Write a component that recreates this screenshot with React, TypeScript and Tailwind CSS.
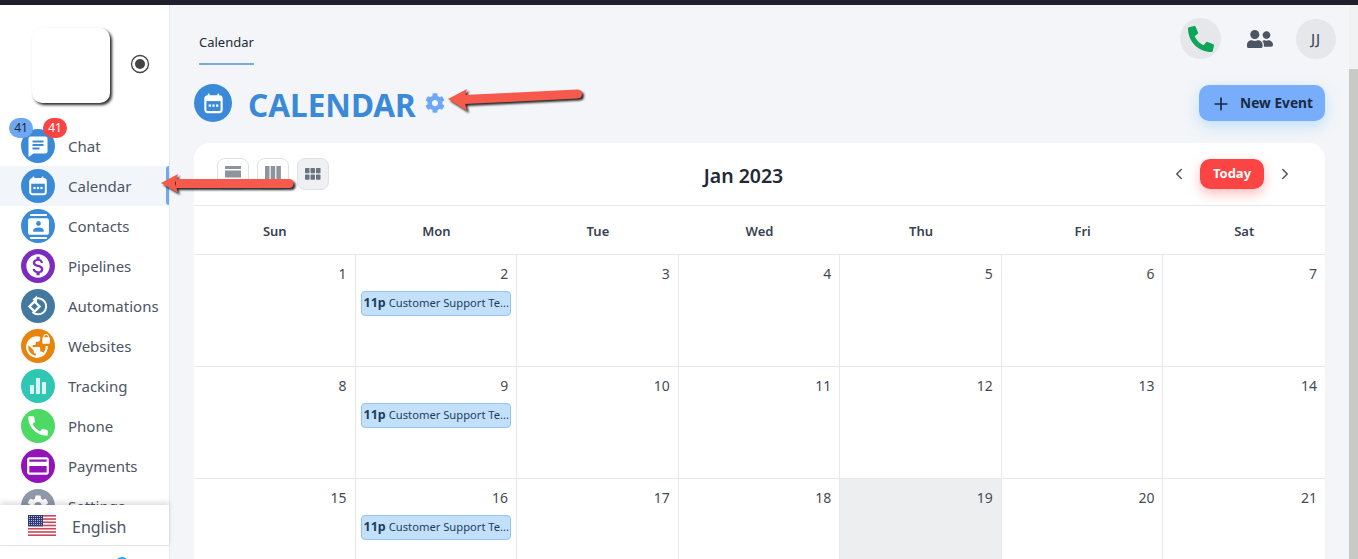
import React from "react";
import { Plus, ChevronLeft, ChevronRight } from "lucide-react";
import { MdContacts, MdMonetizationOn, MdVpnLock, MdCall, MdCreditCard, MdSettings } from "react-icons/md";
import { FaCog, FaPhoneAlt, FaUserFriends } from "react-icons/fa";

function ChatIcon() {
  return (
    <svg width="24" height="24" viewBox="0 0 24 24">
      <path d="M4.5 2.5h15a2 2 0 0 1 2 2v13a2 2 0 0 1-2 2H7.5L2.5 23V4.5a2 2 0 0 1 2-2Z" fill="white" />
      <rect x="6.5" y="6.5" width="11" height="2" fill="#3a8ad8" />
      <rect x="6.5" y="10" width="11" height="2" fill="#3a8ad8" />
      <rect x="6.5" y="13.5" width="7" height="2" fill="#3a8ad8" />
    </svg>
  );
}

function CalIcon({ size }: { size: number }) {
  return (
    <svg width={size} height={size} viewBox="0 0 24 24" fill="none">
      <path d="M7 2.5v3M17 2.5v3" stroke="white" strokeWidth="2" strokeLinecap="round" />
      <rect x="3.5" y="4.5" width="17" height="16.5" rx="2.5" stroke="white" strokeWidth="2.2" />
      <rect x="3.5" y="4.5" width="17" height="5" fill="white" />
      <rect x="7" y="13" width="2.4" height="2.4" fill="white" />
      <rect x="10.8" y="13" width="2.4" height="2.4" fill="white" />
      <rect x="14.6" y="13" width="2.4" height="2.4" fill="white" />
    </svg>
  );
}

function AutoIcon() {
  return (
    <svg width="24" height="24" viewBox="0 0 24 24" fill="none">
      <path d="M8 5.5A8 8 0 1 1 6.5 18" stroke="white" strokeWidth="2" />
      <path d="M11 1.5 L6.5 5.5 L11 9 Z" fill="white" />
      <path d="M8.5 7.5 L13.5 12.5 L8.5 17.5 L3.5 12.5 Z" stroke="white" strokeWidth="2.4" fill="none" />
    </svg>
  );
}

function BarsIcon() {
  return (
    <svg width="20" height="20" viewBox="0 0 20 20" fill="#d9f5f0">
      <rect x="2" y="9" width="4" height="9" />
      <rect x="8" y="2" width="4" height="16" />
      <rect x="14" y="6" width="4" height="12" />
    </svg>
  );
}

const nav: { label: string; bg: string; icon: React.ReactNode; active?: boolean }[] = [
  { label: "Chat", bg: "bg-[#3a8ad8]", icon: <ChatIcon /> },
  { label: "Calendar", bg: "bg-[#3a8ad8]", icon: <CalIcon size={22} />, active: true },
  { label: "Contacts", bg: "bg-[#3a8ad8]", icon: <MdContacts size={25} color="white" /> },
  { label: "Pipelines", bg: "bg-[#7b2cbf]", icon: <MdMonetizationOn size={28} color="white" /> },
  { label: "Automations", bg: "bg-[#44799f]", icon: <AutoIcon /> },
  { label: "Websites", bg: "bg-[#e8830c]", icon: <MdVpnLock size={26} color="white" /> },
  { label: "Tracking", bg: "bg-[#2fc7b4]", icon: <BarsIcon /> },
  { label: "Phone", bg: "bg-[#4cd964]", icon: <MdCall size={26} color="white" /> },
  { label: "Payments", bg: "bg-[#9213b8]", icon: <MdCreditCard size={26} color="white" /> },
  { label: "Settings", bg: "bg-[#8f99a8]", icon: <MdSettings size={26} color="white" /> },
];

const days = ["Sun", "Mon", "Tue", "Wed", "Thu", "Fri", "Sat"];
const weeks = [
  [1, 2, 3, 4, 5, 6, 7],
  [8, 9, 10, 11, 12, 13, 14],
  [15, 16, 17, 18, 19, 20, 21],
];

function Flag() {
  const stripes = [0, 2, 4, 6, 8, 10, 12];
  return (
    <svg width="28" height="21" viewBox="0 0 28 21">
      <rect width="28" height="21" fill="#fff" />
      {stripes.map((s) => (
        <rect key={s} y={(s * 21) / 13} width="28" height={21 / 13} fill="#c8495a" />
      ))}
      <rect width="15" height="11.3" fill="#2f3a74" />
      {[1.5, 3.5, 5.5, 7.5, 9.5].map((y) =>
        [1.5, 3.5, 5.5, 7.5, 9.5, 11.5, 13.5].map((x) => (
          <circle key={`${x}-${y}`} cx={x} cy={y} r="0.55" fill="#c9cfe6" />
        ))
      )}
    </svg>
  );
}

function Sidebar() {
  return (
    <aside className="relative flex w-[170px] shrink-0 flex-col border-r border-[#e6e8ec] bg-white">
      <div className="flex h-[121px] shrink-0 items-start pl-[32px] pt-[23px]">
        <div className="h-[75px] w-[78px] rounded-[10px] bg-white shadow-[2px_2px_3px_rgba(0,0,0,0.85)]" />
        <svg className="ml-[20px] mt-[26px]" width="20" height="20" viewBox="0 0 20 20">
          <circle cx="10" cy="10" r="8.5" fill="none" stroke="#444" strokeWidth="1.3" />
          <circle cx="10" cy="10" r="5" fill="#444" />
        </svg>
      </div>
      <nav className="flex h-[379px] flex-col overflow-hidden">
        {nav.map((n) => (
          <div
            key={n.label}
            className={`relative flex h-[40px] shrink-0 items-center pl-[21px] ${n.active ? "bg-[#f2f6fb]" : ""}`}
          >
            <div className={`flex h-[34px] w-[34px] items-center justify-center rounded-full ${n.bg}`}>{n.icon}</div>
            <span className="ml-[13px] text-[15px] text-[#4b5563]">{n.label}</span>
            {n.active && <div className="absolute right-0 top-0 h-[39px] w-[3px] rounded-l bg-[#6ea8f0]" />}
          </div>
        ))}
      </nav>
      <div className="relative flex h-[41px] shrink-0 items-center border-b border-[#e3e5e8] bg-white pl-[28px] shadow-[0_-3px_5px_rgba(0,0,0,0.12)]">
        <Flag />
        <span className="ml-[16px] mt-[3px] text-[16px] text-[#4b5563]">English</span>
      </div>
      <div className="absolute bottom-[-12px] left-[115px] h-[14px] w-[14px] rounded-full bg-[#2aa8f0]" />
      <div className="absolute left-[9px] top-[113px] flex h-[20px] w-[24px] items-center justify-center rounded-full bg-[#6ea8f0] text-[12px] text-[#1f2937]">41</div>
      <div className="absolute left-[43px] top-[113px] flex h-[20px] w-[24px] items-center justify-center rounded-full bg-[#f94444] text-[12px] text-white">41</div>
    </aside>
  );
}

function ViewBtn({ active, children }: { active?: boolean; children: React.ReactNode }) {
  return (
    <div className={`flex h-[32px] w-[32px] items-center justify-center rounded-[8px] border border-[#dfe1e4] ${active ? "bg-[#eef0f2]" : "bg-white"}`}>
      {children}
    </div>
  );
}

function CalendarCard() {
  return (
    <section className="mt-[21px] flex-1 rounded-t-[16px] bg-white">
      <div className="flex h-[63px] items-center justify-between border-b border-[#e7e8ea] pb-[1px] pl-[23px] pr-[31px]">
        <div className="flex gap-[8px]">
          <ViewBtn>
            <svg width="16" height="16" viewBox="0 0 16 16" fill="#8d949b">
              <rect y="0" width="16" height="3" />
              <rect y="4.5" width="16" height="7" />
              <rect y="13" width="16" height="3" />
            </svg>
          </ViewBtn>
          <ViewBtn>
            <svg width="16" height="16" viewBox="0 0 16 16" fill="#8d949b">
              <rect x="0" width="4.5" height="16" />
              <rect x="5.7" width="4.5" height="16" />
              <rect x="11.4" width="4.5" height="16" />
            </svg>
          </ViewBtn>
          <ViewBtn active>
            <svg width="16" height="14" viewBox="0 0 16 14" fill="#6b7280">
              {[0, 5.5, 11].map((x) =>
                [1, 7.5].map((y) => <rect key={`${x}-${y}`} x={x} y={y} width="4.5" height="5.2" rx="0.6" />)
              )}
            </svg>
          </ViewBtn>
        </div>
        <h2 className="pr-[12px] pt-[4px] text-[19.5px] font-semibold text-[#1f2937]">Jan 2023</h2>
        <div className="flex items-center gap-[12px]">
          <ChevronLeft size={18} color="#4b5563" />
          <div className="flex h-[30px] w-[64px] items-center justify-center rounded-[10px] bg-[#fb4444] pt-[1px] text-[13px] font-bold text-white shadow-[0_5px_12px_rgba(251,68,68,0.35)]">
            Today
          </div>
          <ChevronRight size={18} color="#4b5563" />
        </div>
      </div>
      <div className="grid h-[49px] grid-cols-7 items-center border-b border-[#e7e8ea] pt-[3px]">
        {days.map((d) => (
          <div key={d} className="text-center text-[13px] font-semibold text-[#374151]">{d}</div>
        ))}
      </div>
      {weeks.map((w, wi) => (
        <div key={wi} className="grid h-[112px] grid-cols-7 border-b border-[#e7e8ea]">
          {w.map((n, i) => (
            <div
              key={n}
              className={`flex flex-col border-r border-[#e7e8ea] pt-[8px] last:border-r-0 ${n === 19 ? "bg-[#eceef0]" : ""}`}
            >
              <div className="pr-[8px] text-right text-[14px] leading-[22px] text-[#444b55]">{n}</div>
              {i === 1 && (
                <div className="mx-[5px] mt-[6px] flex h-[25px] items-center whitespace-nowrap rounded-[4px] border border-[#93c3ee] bg-[#c3e0fb] pl-[2px] text-[11.2px] text-[#1d3d5f]">
                  <b className="mr-[3px] text-[12.5px] font-bold">11p</b>
                  <span>Customer Support Te...</span>
                </div>
              )}
            </div>
          ))}
        </div>
      ))}
    </section>
  );
}

function Main() {
  return (
    <main className="flex min-w-0 flex-1 flex-col bg-[#f3f5f8] px-[24px]">
      <header className="flex h-[60px] shrink-0 items-start justify-between">
        <div className="ml-[5px] mt-[26px] flex h-[34px] flex-col justify-between border-b-2 border-[#7aa9dd] pb-0">
          <span className="text-[13px] leading-[22px] text-[#1f2937]">Calendar</span>
        </div>
        <div className="mr-[-11px] mt-[13px] flex items-center">
          <div className="flex h-[41px] w-[41px] items-center justify-center rounded-full bg-[#e5e7eb]">
            <FaPhoneAlt size={26} color="#0ea55a" />
          </div>
          <div className="ml-[25px] flex w-[28px] justify-center">
            <FaUserFriends size={26} color="#4b5563" />
          </div>
          <div className="ml-[22px] flex h-[40px] w-[40px] items-center justify-center rounded-full bg-[#e5e7eb] text-[15px] tracking-[1px] text-[#374151]">JJ</div>
        </div>
      </header>
      <div className="mt-[19px] flex h-[38px] shrink-0 items-center">
        <div className="flex h-[38px] w-[38px] items-center justify-center rounded-full bg-[#3a8ad8]">
          <CalIcon size={23} />
        </div>
        <h1 className="ml-[16px] pt-[3px] text-[31.5px] font-bold leading-none text-[#3a8ad8]">CALENDAR</h1>
        <FaCog size={20} color="#6ea8f5" className="ml-[9px]" />
        <div className="ml-auto flex h-[36px] w-[126px] items-center justify-center gap-[9px] rounded-[10px] bg-[#77adfb] pt-[1px] text-[13.7px] font-bold text-[#1a2a44] shadow-[0_5px_14px_rgba(125,200,255,0.45)]">
          <Plus size={20} />
          New Event
        </div>
      </div>
      <CalendarCard />
    </main>
  );
}

function Arrow({ className, d, head, w, h, extra }: { className: string; d: string; head: string; w: number; h: number; extra?: React.ReactNode }) {
  return (
    <svg
      className={`pointer-events-none absolute drop-shadow-[2px_2px_1px_rgba(0,0,0,0.85)] ${className}`}
      width={w}
      height={h}
      viewBox={`0 0 ${w} ${h}`}
    >
      {extra}
      <path d={d} fill="#f65a4c" />
      <path d={head} fill="#f65a4c" />
    </svg>
  );
}

export default function App() {
  return (
    <div className="relative flex h-[559px] w-[1358px] flex-col overflow-hidden bg-white font-['Noto_Sans',sans-serif]">
      <div className="h-[5px] shrink-0 bg-[#1f1f2e]" />
      <div className="flex min-h-0 flex-1">
        <Sidebar />
        <Main />
        <div className="w-[9px] shrink-0 bg-[#f1f2f3] pt-[64px]">
          <div className="h-full bg-[#c9c9c7]" />
        </div>
      </div>
      <Arrow
        className="left-[447px] top-[86px]"
        w={140}
        h={28}
        d="M17 9 L130 3.5 Q135 3.5 135 8 Q135 12 130 12.5 L17 18 Z"
        head="M1 13 L20 3 L17 13.5 L20 25 Z"
      />
      <Arrow
        className="left-[160px] top-[172px]"
        w={138}
        h={24}
        d="M16 7 L129 7 Q133.5 7 133.5 11.5 Q133.5 16 129 16 L16 16 Z"
        head="M1 11 L18 2 L15 11.5 L18 21 Z"
      />
    </div>
  );
}
